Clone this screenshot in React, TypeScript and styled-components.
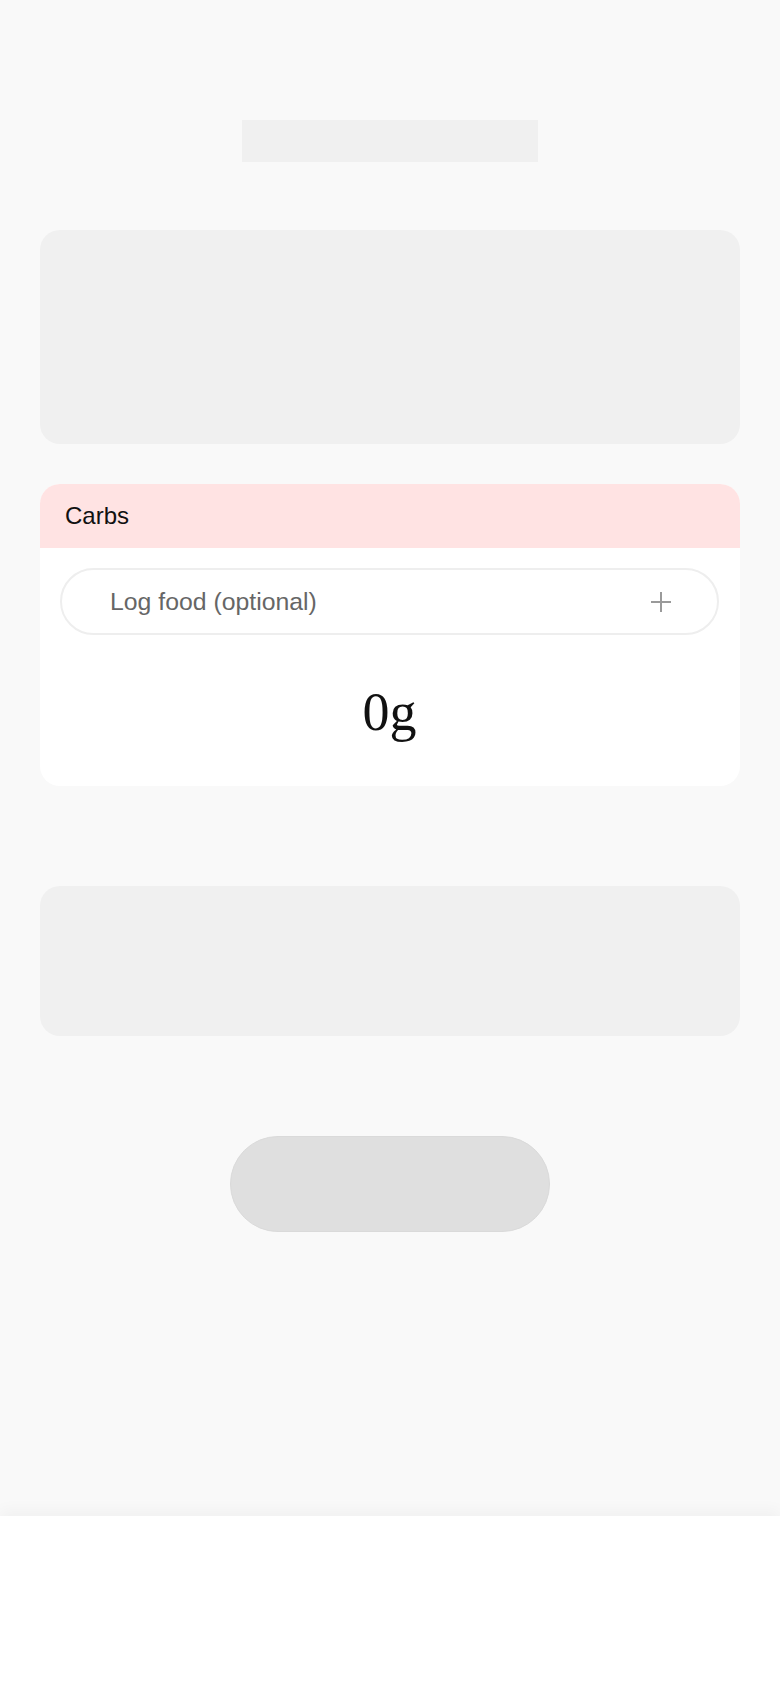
import React from 'react';
import styled, { createGlobalStyle } from 'styled-components';

const colors = {
  page: '#f9f9f9',
  skeleton: '#f0f0f0',
  skeletonDark: '#dfdfdf',
  pink: '#ffe3e3',
  border: '#eeeeee',
  text: '#111111',
  muted: '#666666',
  icon: '#9a9a9a',
};

const GlobalStyle = createGlobalStyle`
  html, body {
    margin: 0;
    padding: 0;
    background: ${colors.page};
  }

  body {
    font-family: "Liberation Sans", Arial, sans-serif;
    color: ${colors.text};
  }

  * {
    box-sizing: border-box;
  }
`;

const Page = styled.main`
  display: flex;
  flex-direction: column;
  align-items: center;
  min-height: 100vh;
  padding: 120px 40px 200px;
  background: ${colors.page};
`;

const TitleSkeleton = styled.div`
  width: 296px;
  height: 42px;
  background: ${colors.skeleton};
`;

const CardSkeleton = styled.div<{ $height: number; $top: number }>`
  width: 100%;
  height: ${(p) => p.$height}px;
  margin-top: ${(p) => p.$top}px;
  border-radius: 20px;
  background: ${colors.skeleton};
`;

const MacroCard = styled.section`
  width: 100%;
  margin-top: 40px;
  border-radius: 20px;
  overflow: hidden;
  background: #ffffff;
`;

const MacroHeader = styled.header`
  display: flex;
  align-items: center;
  height: 64px;
  padding: 0 25px;
  background: ${colors.pink};
  font-size: 24px;
  color: ${colors.text};
`;

const MacroBody = styled.div`
  display: flex;
  flex-direction: column;
  align-items: stretch;
  gap: 47px;
  padding: 20px 21px 44px 20px;
`;

const LogButton = styled.button`
  display: flex;
  align-items: center;
  justify-content: space-between;
  height: 67px;
  padding: 0 46px 0 48px;
  border: 2px solid ${colors.border};
  border-radius: 999px;
  background: #ffffff;
  font-family: inherit;
  font-size: 24.8px;
  color: ${colors.muted};
  cursor: pointer;
`;

const Amount = styled.div`
  text-align: center;
  font-family: "Liberation Serif", "Times New Roman", serif;
  font-size: 54px;
  line-height: 60px;
  color: ${colors.text};
`;

const PillSkeleton = styled.div`
  width: 320px;
  height: 96px;
  margin-top: 100px;
  border-radius: 48px;
  border: 1px solid #dadada;
  background: ${colors.skeletonDark};
`;

const BottomBar = styled.nav`
  position: fixed;
  left: 0;
  right: 0;
  bottom: 0;
  height: 172px;
  background: #ffffff;
  box-shadow: 0 -6px 14px rgba(0, 0, 0, 0.035);
`;

const PlusIcon = () => (
  <svg width="20" height="20" viewBox="0 0 20 20" fill="none" stroke={colors.icon} strokeWidth="2">
    <path d="M10 0v20M0 10h20" />
  </svg>
);

const App = () => {
  return (
    <>
      <GlobalStyle />
      <Page>
        <TitleSkeleton />
        <CardSkeleton $height={214} $top={68} />

        <MacroCard>
          <MacroHeader>Carbs</MacroHeader>
          <MacroBody>
            <LogButton type="button">
              <span>Log food (optional)</span>
              <PlusIcon />
            </LogButton>
            <Amount>0g</Amount>
          </MacroBody>
        </MacroCard>

        <CardSkeleton $height={150} $top={100} />
        <PillSkeleton />
      </Page>
      <BottomBar />
    </>
  );
};

export default App;
